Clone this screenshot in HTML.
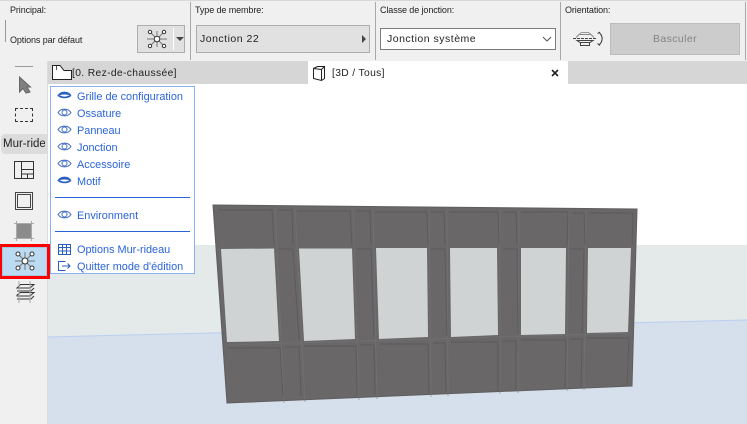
<!DOCTYPE html>
<html><head><meta charset="utf-8"><style>
html,body{margin:0;padding:0}
body{width:747px;height:424px;position:relative;overflow:hidden;background:#fff;font-family:"Liberation Sans",sans-serif}
.a{position:absolute}
.t{position:absolute;white-space:nowrap;line-height:12px}
.l{font-size:9px;color:#222;letter-spacing:-.1px}
.m{font-size:10.9px;color:#2a64d8;left:77px}
.v{font-size:10.5px;color:#222;letter-spacing:.5px}
</style></head><body>
<div class="a" style="left:0;top:0;width:747px;height:61px;background:#f0f0f0;border-top:1px solid #d8d8d8;box-sizing:border-box"></div>
<div class="a" style="left:190px;top:2px;width:1px;height:58px;background:#a8a8a8"></div>
<div class="a" style="left:375px;top:2px;width:1px;height:58px;background:#a8a8a8"></div>
<div class="a" style="left:560px;top:2px;width:1px;height:58px;background:#a8a8a8"></div>
<div class="a" style="left:745px;top:2px;width:1px;height:58px;background:#a8a8a8"></div>
<div class="a" style="left:5px;top:20px;width:1px;height:22px;background:#999"></div>
<div class="t l" style="left:10px;top:4px">Principal:</div>
<div class="t l" style="left:10px;top:34px">Options par défaut</div>
<div class="t l" style="left:195px;top:4px">Type de membre:</div>
<div class="t l" style="left:380px;top:4px">Classe de jonction:</div>
<div class="t l" style="left:565px;top:4px">Orientation:</div>

<div class="a" style="left:137px;top:25px;width:48px;height:28px;background:#e1e1e1;border:1px solid #adadad;box-sizing:border-box"></div>
<div class="a" style="left:173px;top:28px;width:1px;height:22px;background:#fff"></div>
<div class="a" style="left:175px;top:37px;border-left:4px solid transparent;border-right:4px solid transparent;border-top:4px solid #444;margin-left:1px"></div>
<svg class="a" style="left:146px;top:28px" width="22" height="22" viewBox="0 0 22 22" fill="none" stroke="#333" stroke-width="1"><path d="M5 5 9 9M17 5 13 9M5 17 9 13M17 17 13 13M1 11H21M11 3V19" stroke="#777"/><circle cx="11" cy="11" r="2.8" fill="#fff"/><circle cx="4" cy="4" r="1.7" fill="#fff"/><circle cx="18" cy="4" r="1.7" fill="#fff"/><circle cx="4" cy="18" r="1.7" fill="#fff"/><circle cx="18" cy="18" r="1.7" fill="#fff"/></svg>

<div class="a" style="left:196px;top:25px;width:174px;height:28px;background:#e1e1e1;border:1px solid #adadad;box-sizing:border-box"></div>
<div class="t v" style="left:200px;top:33px">Jonction 22</div>
<div class="a" style="left:362px;top:35px;border-top:4px solid transparent;border-bottom:4px solid transparent;border-left:4px solid #444"></div>

<div class="a" style="left:380px;top:28px;width:176px;height:22px;background:#fff;border:1px solid #7a7a7a;box-sizing:border-box"></div>
<div class="t v" style="left:387px;top:33px">Jonction système</div>
<svg class="a" style="left:542px;top:36px" width="10" height="6" fill="none" stroke="#555"><path d="M1 1 5 5 9 1"/></svg>

<svg class="a" style="left:572px;top:30px" width="32" height="18" viewBox="0 0 32 18" fill="none" stroke="#444" stroke-width="1"><path d="M7 4.500 9.500 2.500H16.500L19 4.500" stroke="#999"/><path d="M4 7.500 7 4.500H19L22 7.500" stroke="#888"/><path d="M1 8.500H25" stroke-dasharray="3 1"/><path d="M5 10.500H21L18 12.500H8ZM8.500 12.500V15.500H17.500V12.500"/><path d="M27.500 3C31 6 31 11 27.500 14.500M25.500 3.500 28 2M25.500 13.500 28 15.500" stroke="#333"/></svg>
<div class="a" style="left:610px;top:23px;width:130px;height:32px;background:#ccc;border:1px solid #bcbcbc;box-sizing:border-box"></div>
<div class="t" style="left:610px;top:33px;width:130px;text-align:center;font-size:10.5px;color:#838383;letter-spacing:.4px">Basculer</div>

<div class="a" style="left:47px;top:61px;width:700px;height:23px;background:#d6d6d6"></div>
<div class="a" style="left:308px;top:61px;width:260px;height:23px;background:#fff"></div>
<svg class="a" style="left:51px;top:64px" width="22" height="17" fill="#fff" stroke="#222"><path d="M1.500 1.500H9L13 6.500H20.500V15.500H1.500Z"/><path d="M5.500 2V6" stroke="#555"/></svg>
<div class="t" style="left:72px;top:68px;font-size:10.3px;color:#222;letter-spacing:.35px">[0. Rez-de-chaussée]</div>
<svg class="a" style="left:312px;top:65px" width="15" height="18" fill="none" stroke="#222"><path d="M1.500 3.500 5.500 1.500H12.500V13.500L9.500 15.500 1.500 13.500ZM12.500 1.500 9.500 4.500V15.500M1.500 3.500 9.500 4.500"/></svg>
<div class="t" style="left:332px;top:68px;font-size:10.3px;color:#222;letter-spacing:.35px">[3D / Tous]</div>
<svg class="a" style="left:551px;top:69px" width="8" height="8" stroke="#222" stroke-width="1.600"><path d="M1 1 7 7M7 1 1 7"/></svg>

<svg class="a" style="left:47px;top:84px" width="700" height="340" viewBox="47 84 700 340">
<rect x="47" y="84" width="700" height="340" fill="#fff"/>
<path d="M47 245H747V321L47 337Z" fill="#e4e9ea"/>
<path d="M47 337 747 320V424H47Z" fill="#d6e0ec"/>
<path d="M47 337 747 320" stroke="#b9cff0" stroke-width="1"/>
<path d="M213 205 637 209 632 386 227 403Z" fill="#696768"/>
<path d="M213 205 637 209 632 386 227 403Z" fill="none" stroke="#5f5d5e" stroke-width="1"/>
<g fill="none" stroke="#767475" stroke-width="1" opacity=".55">
<path d="M275 208 284 403M295 208 305 402M353 208 359 400M373 209 377 399M429 209 431 397M447 209 448 396M500 210 500 394M519 210 518 393M569 210 567 391M586 210 584 390"/>
<path d="M225 345 632 333"/>
</g>
<g fill="none" stroke="#5a5859" stroke-width="1" opacity=".8">
<path d="M218 210H272L274 245M278 210H292L293 245M297 211H350L352 245M356 211H370L371 245M375 212H427L428 245M431 212H444L445 245M449 212H498L499 245M503 212H516L517 245M521 212H568L567 245M573 213H584L585 245M589 213H633L632 245" />
<path d="M279 249H293L299 340M357 249H371L374 338M431 249H445L447 336M503 249H517L518 335M571 249H584L582 333" />
<path d="M228 348H280L283 397M285 347H299L301 396M304 346H356L357 395M360 345H374L375 394M380 344H428L429 393M433 343H445L446 392M451 342H498L498 391M503 341H516L516 390M521 340H566L565 388M570 339H582L581 388M587 338H629L627 385"/>
</g>
<g fill="#d0d3d4">
<path d="M221 249 274 248.500 279 341 227 342Z"/>
<path d="M299 248.500 352 248.500 355 339 304 341Z"/>
<path d="M376 248 427 248 428 337 379 339Z"/>
<path d="M450 248 497 248 498 335 451 337Z"/>
<path d="M521 248 566 248 565 334 521 335Z"/>
<path d="M588 248 631 248 628 332 587 333Z"/>
</g>
</svg>

<div class="a" style="left:0;top:61px;width:47px;height:363px;background:#f0f0f0;border-right:1px solid #dcdcdc"></div>
<div class="a" style="left:15px;top:66px;width:18px;height:1px;background:#999"></div>
<svg class="a" style="left:18px;top:75px" width="14" height="20"><path d="M1.500 2V17L5 13.500 8 18 12 17 9 12H12.500Z" fill="#808080" stroke="#666"/></svg>
<div class="a" style="left:15px;top:108px;width:18px;height:14px;border:1px dashed #333;box-sizing:border-box"></div>
<div class="a" style="left:1px;top:134px;width:46px;height:20px;background:#dcdcdc;border-radius:4px 0 0 4px"></div>
<div class="t" style="left:3px;top:138px;width:42px;overflow:hidden;font-size:11.5px;color:#222">Mur-rideau</div>
<svg class="a" style="left:13px;top:160px" width="22" height="20" fill="none" stroke="#333"><path d="M1.500 1.500H20.500V18.500H1.500ZM8.500 1.500V18.500M8.500 9.500H20.500M8.500 14H20.500M14.500 14V18.500"/></svg>
<svg class="a" style="left:14px;top:191px" width="20" height="20" fill="none" stroke="#444"><path d="M3.500 3.500H16.500V16.500H3.500ZM1.500 1.500H18.500V18.500H1.500Z"/></svg>
<svg class="a" style="left:14px;top:221px" width="20" height="20"><path d="M2.500 2.500H17.500V17.500H2.500Z" fill="#8b8b8b" stroke="#444"/><path d="M0 2.500H20M0 17.500H20M2.500 0V20M17.500 0V20" stroke="#aaa" fill="none"/></svg>

<div class="a" style="left:0;top:244px;width:50px;height:35px;background:#ff0000"></div>
<div class="a" style="left:2px;top:247px;width:45px;height:29px;background:#bcdaf1;border:1px solid #a4c8e2;box-sizing:border-box"></div>
<svg class="a" style="left:14px;top:250px" width="22" height="22" viewBox="0 0 22 22" fill="none" stroke="#333"><path d="M5 5 9 9M17 5 13 9M5 17 9 13M17 17 13 13M1 11H21M11 2V20" stroke="#777"/><circle cx="11" cy="11" r="3" fill="#fff"/><circle cx="4" cy="4" r="2" fill="#fff"/><circle cx="18" cy="4" r="2" fill="#fff"/><circle cx="4" cy="18" r="2" fill="#fff"/><circle cx="18" cy="18" r="2" fill="#fff"/></svg>
<svg class="a" style="left:14px;top:281px" width="22" height="22" fill="none" stroke="#333"><path d="M3 7 6.500 3.500H20L16 7ZM3 10H17L20 7M3 14 6.500 11.500H20L16 15H3ZM3 18H17L20 15" /><path d="M5 0V22M16 0V22" stroke="#aaa"/></svg>

<div class="a" style="left:50px;top:86px;width:145px;height:188px;background:#fff;border:1px solid #8ab0f2;box-sizing:border-box"></div>
<div class="t m" style="top:91px">Grille de configuration</div>
<div class="t m" style="top:108px">Ossature</div>
<div class="t m" style="top:125px">Panneau</div>
<div class="t m" style="top:142px">Jonction</div>
<div class="t m" style="top:159px">Accessoire</div>
<div class="t m" style="top:176px">Motif</div>
<div class="a" style="left:55px;top:197px;width:135px;height:1px;background:#2a64d8"></div>
<div class="t m" style="top:210px">Environment</div>
<div class="a" style="left:55px;top:231px;width:135px;height:1px;background:#2a64d8"></div>
<div class="t m" style="top:244px">Options Mur-rideau</div>
<div class="t m" style="top:261px">Quitter mode d'édition</div>

<svg class="a" style="left:57px;top:90px" width="15" height="11"><path d="M1 5.500C4 1 11 1 14 5.500C11 3.500 4 3.500 1 5.500C4 8.500 11 8.500 14 5.500" fill="#2a5fc0" stroke="#2a5fc0"/><path d="M3.500 5.500C6 4.500 9 4.500 11.500 5.500C9 7 6 7 3.500 5.500Z" fill="#fff"/></svg>
<svg class="a" style="left:57px;top:107px" width="15" height="11" fill="none" stroke="#3f6cc2"><path d="M1 5.500C4 1 11 1 14 5.500C11 10 4 10 1 5.500Z"/><circle cx="7.500" cy="5.500" r="2.500"/></svg>
<svg class="a" style="left:57px;top:124px" width="15" height="11" fill="none" stroke="#3f6cc2"><path d="M1 5.500C4 1 11 1 14 5.500C11 10 4 10 1 5.500Z"/><circle cx="7.500" cy="5.500" r="2.500"/></svg>
<svg class="a" style="left:57px;top:141px" width="15" height="11" fill="none" stroke="#3f6cc2"><path d="M1 5.500C4 1 11 1 14 5.500C11 10 4 10 1 5.500Z"/><circle cx="7.500" cy="5.500" r="2.500"/></svg>
<svg class="a" style="left:57px;top:158px" width="15" height="11" fill="none" stroke="#3f6cc2"><path d="M1 5.500C4 1 11 1 14 5.500C11 10 4 10 1 5.500Z"/><circle cx="7.500" cy="5.500" r="2.500"/></svg>
<svg class="a" style="left:57px;top:175px" width="15" height="11"><path d="M1 5.500C4 1 11 1 14 5.500C11 3.500 4 3.500 1 5.500C4 8.500 11 8.500 14 5.500" fill="#2a5fc0" stroke="#2a5fc0"/><path d="M3.500 5.500C6 4.500 9 4.500 11.500 5.500C9 7 6 7 3.500 5.500Z" fill="#fff"/></svg>
<svg class="a" style="left:57px;top:209px" width="15" height="11" fill="none" stroke="#3f6cc2"><path d="M1 5.500C4 1 11 1 14 5.500C11 10 4 10 1 5.500Z"/><circle cx="7.500" cy="5.500" r="2.500"/></svg>
<svg class="a" style="left:58px;top:244px" width="13" height="11" fill="none" stroke="#2a5fc0"><path d="M.5.500H12.500V10.500H.5ZM.5 3.500H12.500M.5 7H12.500M4.500.5V10.500M8.500.5V10.500"/></svg>
<svg class="a" style="left:58px;top:260px" width="13" height="12" fill="none" stroke="#2a5fc0"><path d="M7.500 1.500H.5V10.500H7.500M4 6H12M9.500 3.500 12 6 9.500 8.500"/></svg>
</body></html>
